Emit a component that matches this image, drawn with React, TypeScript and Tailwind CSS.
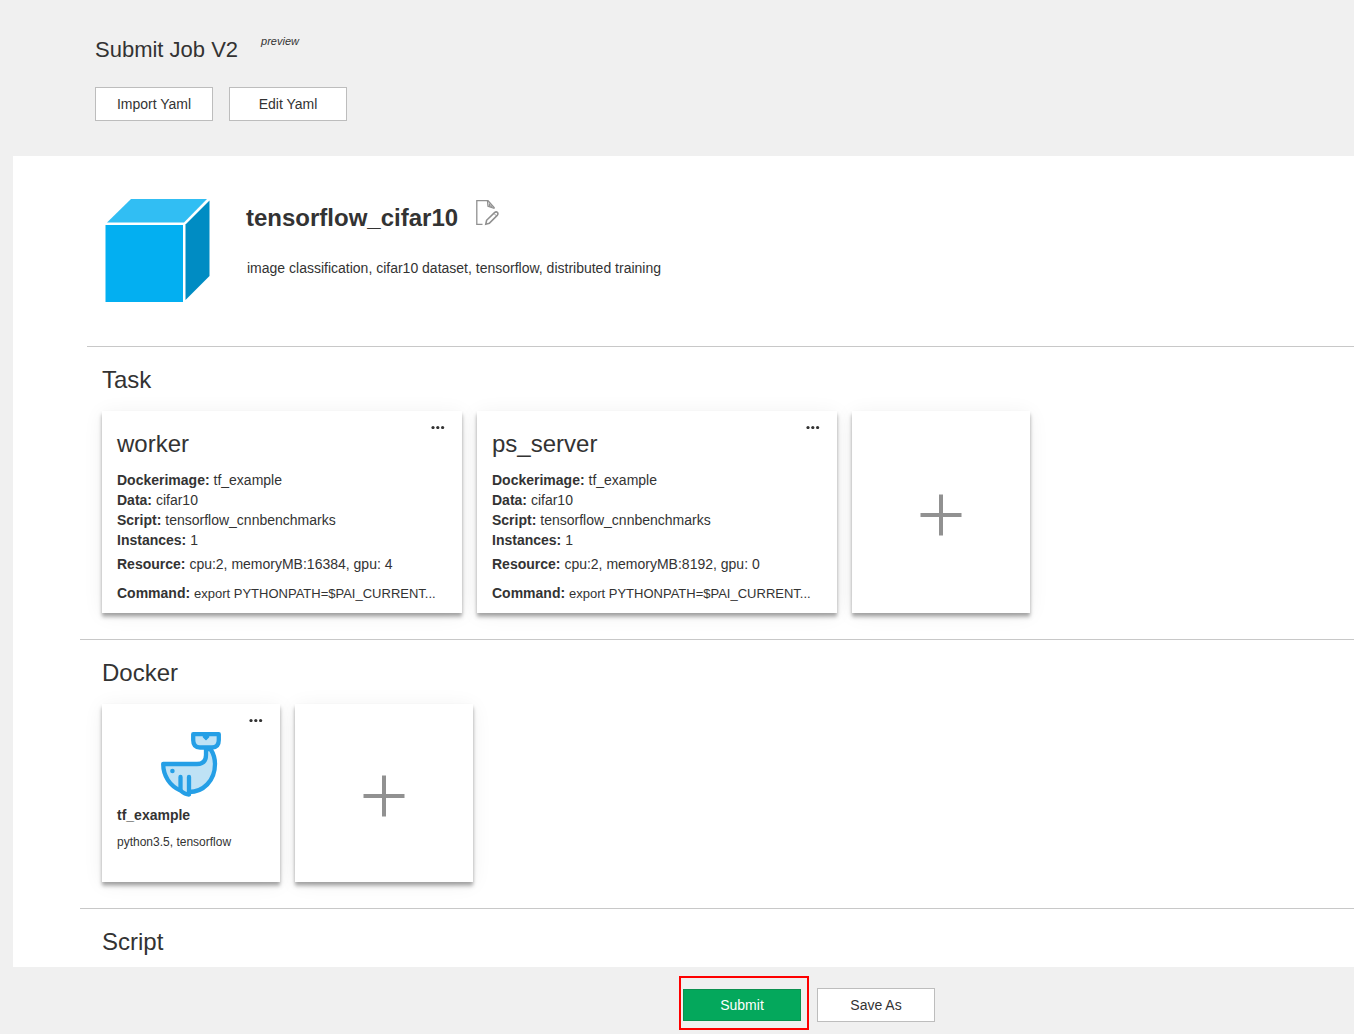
import React from "react";

const cardShadow =
  "bg-white shadow-[0_4px_4px_rgba(0,0,0,0.28),0_2px_3px_rgba(0,0,0,0.1),0_2px_20px_rgba(0,0,0,0.06)]";

const outlineButton =
  "h-[34px] w-[118px] border border-[#bdbdbd] bg-white text-sm text-[#333]";

function CubeIcon() {
  return (
    <svg className="h-[104px] w-[105px] shrink-0" viewBox="0 0 105 104" aria-hidden="true">
      <path d="M26 1H102L79 24.500H2Z" fill="#31bef3" />
      <path d="M0.500 27H78V104H0.500Z" fill="#03aff1" />
      <path d="M80.500 26.500L104.500 2.500V78L80.500 102Z" fill="#008cc3" />
    </svg>
  );
}

function EditIcon() {
  return (
    <svg
      className="h-[26px] w-[23px]"
      viewBox="0 0 23 26"
      fill="none"
      stroke="#909090"
      aria-hidden="true"
    >
      <path d="M6.500 24.300H0.800V0.700H12L18.500 8" strokeWidth="1.300" />
      <path d="M11.500 1L12 6.200L18.500 8.500" strokeWidth="1.300" />
      <path d="M13.500 3.500V5.500L16 6.500" strokeWidth="1.200" />
      <path
        d="M9.800 24.200L10.600 20.300L18.500 12.600Q20.200 11.200 21.500 12.500Q22.500 14 21.200 15.400L13.300 23.300Z"
        strokeWidth="1.600"
      />
      <path d="M18 13.500L20.300 15.800" strokeWidth="1" />
    </svg>
  );
}

function WhaleIcon() {
  return (
    <svg
      className="h-[65px] w-[60px]"
      viewBox="0 0 60 65"
      fill="#bfe2f5"
      stroke="#259fe6"
      strokeWidth="4.300"
      strokeLinecap="round"
      strokeLinejoin="round"
      aria-hidden="true"
    >
      <path d="M45 17V23Q45 32 36 32H2.200C2.200 44 9 54 19.500 58.500Q24 62.500 28 62.500V60C42 60 54 49 54 32Q54 24 49.500 17Z" />
      <path d="M32.200 2.200H57.800V8Q57.800 15.500 51 15.500H39Q32.200 15.500 32.200 8Z" />
      <path d="M42.500 2.500H47.500V5L45 7.500L42.500 5Z" fill="#259fe6" strokeWidth="1.500" />
      <path d="M19.500 45V58M28 45V62" fill="none" />
      <circle cx="11.400" cy="39" r="2.300" fill="#259fe6" stroke="none" />
    </svg>
  );
}

function MoreButton({ label }: { label: string }) {
  return (
    <button
      type="button"
      aria-label={label}
      className="absolute right-4 top-2 flex h-4 w-4 items-center justify-center"
    >
      <svg className="h-1 w-[14px]" viewBox="0 0 14 4" fill="#333" aria-hidden="true">
        <circle cx="2" cy="2.500" r="1.600" />
        <circle cx="6.800" cy="2.500" r="1.600" />
        <circle cx="11.600" cy="2.500" r="1.600" />
      </svg>
    </button>
  );
}

function AddCard({ label }: { label: string }) {
  return (
    <button
      type="button"
      aria-label={label}
      className={`flex min-h-[178px] w-[178px] items-center justify-center pt-[6px] ${cardShadow}`}
    >
      <svg className="h-[42px] w-[42px]" viewBox="0 0 42 42" fill="#919191" aria-hidden="true">
        <path d="M19 0.500H23V19H41.500V23H23V41.500H19V23H0.500V19H19Z" />
      </svg>
    </button>
  );
}

function Field({ name, value }: { name: string; value: string }) {
  return (
    <p>
      <b>{name}:</b> {value}
    </p>
  );
}

function TaskCard({ name, memory, gpu }: { name: string; memory: number; gpu: number }) {
  return (
    <article className={`relative w-[360px] px-[15px] pb-[9px] pt-[18px] text-sm leading-5 ${cardShadow}`}>
      <MoreButton label={`${name} options`} />
      <h3 className="mb-3 text-2xl leading-[29px]">{name}</h3>
      <Field name="Dockerimage" value="tf_example" />
      <Field name="Data" value="cifar10" />
      <Field name="Script" value="tensorflow_cnnbenchmarks" />
      <Field name="Instances" value="1" />
      <div className="mt-1">
        <Field name="Resource" value={`cpu:2, memoryMB:${memory}, gpu: ${gpu}`} />
      </div>
      <p className="mt-[9px]">
        <b>Command:</b> <span className="text-[13px]">export PYTHONPATH=$PAI_CURRENT...</span>
      </p>
    </article>
  );
}

function Section({ title, children }: { title: string; children?: React.ReactNode }) {
  return (
    <section className="pl-[22px] pt-[19px]">
      <h2 className="text-2xl leading-7">{title}</h2>
      {children && <div className="mt-[17px] flex gap-[15px] pb-[26px]">{children}</div>}
    </section>
  );
}

export default function App() {
  return (
    <div className="flex min-h-screen flex-col bg-[#f0f0f0] font-['Liberation_Sans',Arial,sans-serif] text-[#333]">
      <header className="px-[95px] pb-[35px] pt-9">
        <div className="flex items-start gap-[23px]">
          <h1 className="text-[22px] leading-[27px]">Submit Job V2</h1>
          <em className="text-[11px] leading-[10px]">preview</em>
        </div>
        <div className="mt-6 flex gap-4">
          <button type="button" className={outlineButton}>Import Yaml</button>
          <button type="button" className={outlineButton}>Edit Yaml</button>
        </div>
      </header>

      <main className="ml-[13px] grow bg-white pl-[67px]">
        <div className="flex pb-11 pl-[25px] pt-[42px]">
          <CubeIcon />
          <div className="ml-9 pt-[2px]">
            <div className="flex items-start gap-[18px]">
              <h2 className="pt-1 text-2xl font-bold leading-7">tensorflow_cifar10</h2>
              <button type="button" aria-label="Edit job">
                <EditIcon />
              </button>
            </div>
            <p className="ml-px mt-[26px] text-sm leading-5">
              image classification, cifar10 dataset, tensorflow, distributed training
            </p>
          </div>
        </div>

        <hr className="ml-[7px] border-[#c8c8c8]" />
        <Section title="Task">
          <TaskCard name="worker" memory={16384} gpu={4} />
          <TaskCard name="ps_server" memory={8192} gpu={0} />
          <AddCard label="Add task" />
        </Section>

        <hr className="border-[#c8c8c8]" />
        <Section title="Docker">
          <article className={`relative min-h-[178px] w-[178px] px-[15px] pt-7 ${cardShadow}`}>
            <MoreButton label="tf_example options" />
            <div className="flex justify-center">
              <WhaleIcon />
            </div>
            <h3 className="mt-2 text-sm font-bold leading-5">tf_example</h3>
            <p className="mt-[7px] text-xs leading-5">python3.5, tensorflow</p>
          </article>
          <AddCard label="Add docker" />
        </Section>

        <hr className="border-[#c8c8c8]" />
        <Section title="Script" />
      </main>

      <footer className="flex items-end justify-center gap-2 pb-1 pl-[260px] pt-[9px]">
        <div className="border-2 border-[#fe0000] pb-[7px] pl-[2px] pr-[6px] pt-[11px]">
          <button
            type="button"
            className="block h-8 w-[118px] border border-[#0b9150] bg-[#04a85c] text-sm text-white"
          >
            Submit
          </button>
        </div>
        <div className="pb-2">
          <button type="button" className={`block ${outlineButton}`}>Save As</button>
        </div>
      </footer>
    </div>
  );
}
